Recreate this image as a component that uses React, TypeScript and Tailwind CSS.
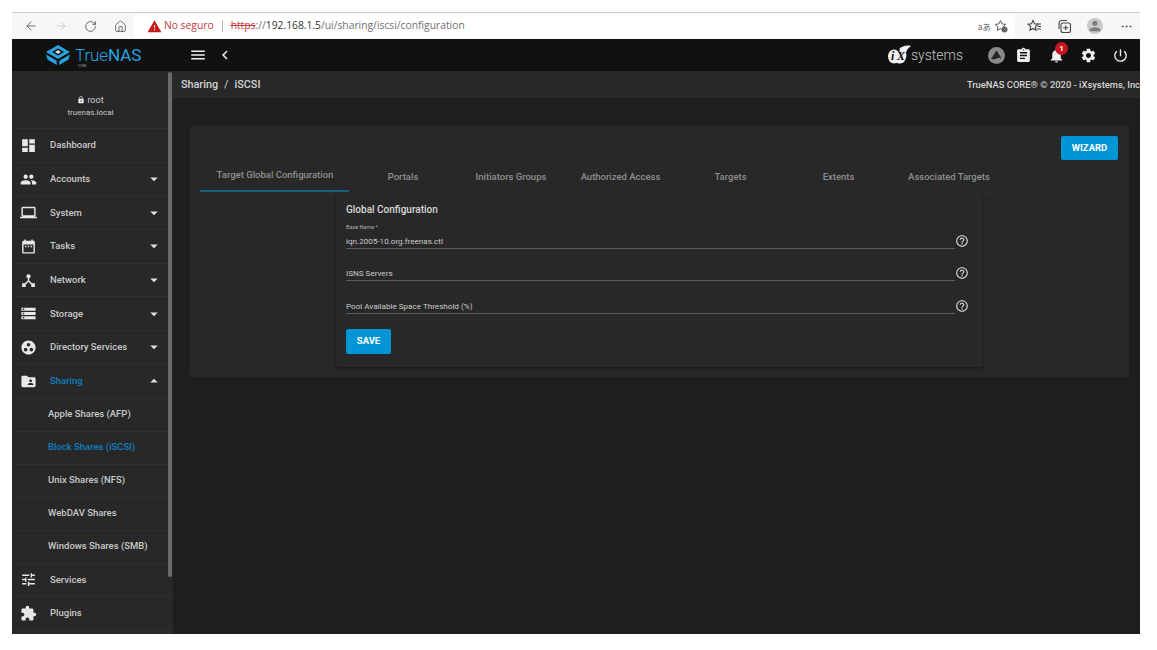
import React from "react";
import {
  MdDashboard, MdPeople, MdLaptop, MdDateRange, MdDeviceHub, MdStorage, MdGroupWork, MdFolderShared,
  MdTune, MdExtension, MdArrowDropDown, MdArrowDropUp, MdMenu, MdChevronLeft, MdLock, MdHelpOutline,
  MdNotifications, MdAssignment, MdSettings, MdPowerSettingsNew, MdWarning, MdPerson,
} from "react-icons/md";
import { ArrowLeft, ArrowRight, RotateCw, Home, MoreHorizontal } from "lucide-react";

const nav: { label: string; Icon: any; caret?: boolean }[] = [
  { label: "Dashboard", Icon: MdDashboard },
  { label: "Accounts", Icon: MdPeople, caret: true },
  { label: "System", Icon: MdLaptop, caret: true },
  { label: "Tasks", Icon: MdDateRange, caret: true },
  { label: "Network", Icon: MdDeviceHub, caret: true },
  { label: "Storage", Icon: MdStorage, caret: true },
  { label: "Directory Services", Icon: MdGroupWork, caret: true },
];
const subs = ["Apple Shares (AFP)", "Block Shares (iSCSI)", "Unix Shares (NFS)", "WebDAV Shares", "Windows Shares (SMB)"];
const tabs: [string, string][] = [
  ["Portals", "w-[108px]"],
  ["Initiators Groups", "w-[108px]"],
  ["Authorized Access", "w-[111px]"],
  ["Targets", "w-[109px]"],
  ["Extents", "w-[107px]"],
  ["Associated Targets", "w-[114px]"],
];

function NavRow({ label, Icon, caret, up, blue }: { label: string; Icon: any; caret?: boolean; up?: boolean; blue?: boolean }) {
  return (
    <div className="h-[33.7px] flex items-center border-b border-[#2f2f2f] pl-[8px] pr-[10px] shrink-0">
      <Icon className="w-[17px] h-[17px] text-[#e8e8e8] shrink-0" />
      <span className={`ml-[13px] flex-1 text-[9.5px] font-medium ${blue ? "text-[#0f7fc0]" : "text-[#c8c8c8]"}`}>{label}</span>
      {caret && (up ? <MdArrowDropUp className="w-[18px] h-[18px] text-[#e0e0e0]" /> : <MdArrowDropDown className="w-[18px] h-[18px] text-[#e0e0e0]" />)}
    </div>
  );
}

function Field({ label, value, mt }: { label?: string; value: string; mt: string }) {
  return (
    <div className={`flex items-end ${mt}`}>
      <div className="w-[609px] border-b border-[#5c5c5c] h-[20px] relative flex items-end pb-[1px]">
        {label && <span className="absolute left-0 top-[-5px] text-[5.5px] leading-[7px] text-[#a8a8a8]">{label}</span>}
        <span className="text-[8.1px] leading-[12px] font-normal text-[#cccccc]">{value}</span>
      </div>
      <MdHelpOutline className="w-[14px] h-[14px] text-[#d8d8d8] mb-[1px]" />
    </div>
  );
}

export default function App() {
  return (
    <div className="w-[1157px] h-[650px] bg-white overflow-hidden pl-[12px] pt-[12px] font-['Roboto',sans-serif]">
      <div className="w-[1128px] h-[622px] flex flex-col overflow-hidden">
        {/* browser chrome */}
        <div className="h-[27px] shrink-0 bg-[#f7f7f7] border-t border-[#cfcfcf] flex items-center">
          <ArrowLeft className="ml-[12px] w-[14px] h-[14px] text-[#444]" strokeWidth={1.3} />
          <ArrowRight className="ml-[16px] w-[14px] h-[14px] text-[#c4c4c4]" strokeWidth={1.3} />
          <RotateCw className="ml-[16px] w-[13px] h-[13px] text-[#444]" strokeWidth={1.4} />
          <Home className="ml-[17px] w-[13px] h-[13px] text-[#444]" strokeWidth={1.4} />
          <div className="ml-[7px] w-[881px] h-[23px] bg-white rounded-[3px] flex items-center pl-[13px] text-[10.3px] whitespace-nowrap font-['Open_Sans',sans-serif]">
            <MdWarning className="w-[15px] h-[15px] text-[#c81818]" />
            <span className="ml-[2px] text-[#c23b3b]">No seguro</span>
            <span className="ml-[8px] w-px h-[12px] bg-[#b5b5b5]" />
            <span className="ml-[8px] text-[#c23b3b] line-through">https</span>
            <span className="text-[#6f6f6f]">://</span>
            <span className="text-[#333]">192.168.1.5</span>
            <span className="text-[#6f6f6f]">/ui/sharing/iscsi/configuration</span>
            <span className="ml-auto text-[8.5px] text-[#666] font-['Noto_Sans_CJK_JP',sans-serif]">aあ</span>
            <svg width="14" height="14" viewBox="0 0 14 14" className="ml-[3px] mr-[7px]">
              <path d="M6.5 1.5l1.6 3.4 3.6.5-2.6 2.5.5 3.5-3.1-1.7-3.2 1.7.6-3.5L1.3 5.4l3.6-.5z" fill="none" stroke="#555" strokeWidth="1" />
              <circle cx="10.5" cy="10.5" r="3" fill="#666" />
            </svg>
          </div>
          <svg width="15" height="14" viewBox="0 0 15 14" className="ml-[12px]">
            <path d="M6 1.5l1.5 3.3 3.5.4-2.6 2.4.6 3.5L6 9.4l-3 1.7.6-3.5L1 5.2l3.5-.4z" fill="none" stroke="#444" strokeWidth="1.1" />
            <path d="M10 5h4M10.5 7.5h3.5M10 10h4" stroke="#444" strokeWidth="1" />
          </svg>
          <svg width="15" height="15" viewBox="0 0 15 15" className="ml-[15px]">
            <path d="M2 10V4.5a3 3 0 0 1 3-3h5" fill="none" stroke="#444" strokeWidth="1.1" />
            <rect x="4" y="4" width="9.5" height="9.5" rx="2" fill="none" stroke="#444" strokeWidth="1.1" />
            <path d="M8.7 6.2v5M6.2 8.7h5" stroke="#444" strokeWidth="1.1" />
          </svg>
          <span className="ml-[15px] w-[16px] h-[16px] rounded-full bg-[#c9c9c9] flex items-center justify-center overflow-hidden">
            <MdPerson className="w-[16px] h-[16px] text-[#7d7d7d]" />
          </span>
          <MoreHorizontal className="ml-[17px] w-[13px] h-[13px] text-[#444]" strokeWidth={1.6} />
        </div>
        {/* top bar */}
        <div className="h-[32px] shrink-0 bg-[#111111] flex items-center text-white">
          <div className="w-[161px] flex items-center pl-[34px] shrink-0">
            <svg width="24" height="20" viewBox="0 0 24 20" className="shrink-0">
              <path d="M0 7L12 0l12 7-12 7z" fill="#27a3e0" />
              <path d="M6 7l6-3.5L18 7l-6 3.5z" fill="#111" />
              <path d="M9 7l3-1.9L15 7l-3 1.9z" fill="#d9d9d9" />
              <path d="M0 9.5l10.7 6.2V20L1.5 14.6z" fill="#27a3e0" />
              <path d="M24 9.5l-10.7 6.2V20l9.2-5.4z" fill="#27a3e0" />
            </svg>
            <span className="ml-[5px] text-[17px] leading-[15px] tracking-[-0.1px] text-[#27a3e0] relative">
              <span className="font-light">True</span><span className="font-normal">NAS</span>
              <span className="absolute left-[3px] top-[16px] text-[3.5px] leading-[4px] text-[#999]">CORE</span>
            </span>
          </div>
          <MdMenu className="ml-[16px] w-[18px] h-[18px] text-[#eee]" />
          <MdChevronLeft className="ml-[9px] w-[18px] h-[18px] text-[#eee]" />
          <div className="ml-auto flex items-center">
            <span className="relative w-[24px] h-[20px] -mr-[1px]">
              <svg width="24" height="20" viewBox="0 0 24 20">
                <ellipse cx="6" cy="11.5" rx="6" ry="7" fill="#f2f2f2" />
                <path d="M12 3c3-2 7-3 11-2-3 2-5 5-5 7 1 3 0 6-2 9-3 2-6 2-8 0 2-3 3-6 4-9 0-2-1-3 0-5z" fill="#f2f2f2" />
              </svg>
              <span className="absolute left-[3px] top-[4px] text-[12px] leading-[14px] font-bold italic text-[#111] font-['Liberation_Serif',serif]">i</span>
              <span className="absolute left-[9px] top-[4px] text-[12px] leading-[14px] font-bold italic text-[#111] font-['Liberation_Serif',serif]">X</span>
            </span>
            <span className="text-[14px] leading-[20px] font-light text-[#c4c4c4]">systems</span>
            <svg width="17" height="17" viewBox="0 0 17 17" className="ml-[25px]">
              <circle cx="8.5" cy="8.5" r="8.5" fill="#8a8a8a" />
              <path d="M8.5 3.5L14 12c-2-1.5-3.5-1.5-5.5-.5S5 12.5 3 12z" fill="#262626" />
            </svg>
            <MdAssignment className="ml-[10px] w-[17px] h-[17px] text-[#f0f0f0]" />
            <span className="ml-[16px] relative">
              <MdNotifications className="w-[17px] h-[17px] text-[#f0f0f0]" />
              <span className="absolute left-[7px] top-[-5px] w-[13px] h-[13px] rounded-full bg-[#c8141e] text-white text-[8px] leading-[13px] text-center font-bold">1</span>
            </span>
            <MdSettings className="ml-[15px] w-[17px] h-[17px] text-[#f0f0f0]" />
            <MdPowerSettingsNew className="ml-[15px] mr-[11px] w-[17px] h-[17px] text-[#f0f0f0]" />
          </div>
        </div>
        {/* body */}
        <div className="flex-1 flex min-h-0">
          <aside className="w-[161px] shrink-0 bg-[#282828] flex flex-col relative overflow-hidden">
            <div className="h-[58px] shrink-0 border-b border-[#2f2f2f] flex flex-col items-center pt-[23px] pr-[4px]">
              <div className="flex items-center text-[9px] leading-[12px] text-[#c8c8c8]">
                <MdLock className="w-[8px] h-[8px] text-[#eee] mr-[2px]" />root
              </div>
              <div className="text-[8px] leading-[12px] text-[#c8c8c8] mt-[1px]">truenas.local</div>
            </div>
            {nav.map((n) => <NavRow key={n.label} {...n} />)}
            <NavRow label="Sharing" Icon={MdFolderShared} caret up blue />
            {subs.map((s, i) => (
              <div key={s} className={`h-[33px] shrink-0 flex items-center pl-[36px] border-b border-[#2f2f2f] text-[9.5px] font-medium ${i === 1 ? "text-[#0f7fc0]" : "text-[#c8c8c8]"}`}>{s}</div>
            ))}
            <NavRow label="Services" Icon={MdTune} />
            <NavRow label="Plugins" Icon={MdExtension} />
            <div className="absolute right-[1px] top-[1px] w-[4px] h-[505px] rounded-full bg-[#6a6a6a]" />
          </aside>
          <main className="flex-1 bg-[#1e1e1e] flex flex-col min-w-0">
            <div className="h-[27px] shrink-0 bg-[#282828] flex items-center justify-between pl-[8px] pt-[2px] whitespace-nowrap">
              <div className="text-[10.8px] font-medium text-[#d4d4d4]">Sharing<span className="mx-[6px] font-normal">/</span>iSCSI</div>
              <div className="text-[9.4px] font-medium text-[#d4d4d4]">TrueNAS CORE® © 2020 - iXsystems, Inc</div>
            </div>
            <section className="mt-[27px] ml-[17px] w-[939px] h-[252px] rounded-[4px] bg-[#282828] flex flex-col pl-[10px] pr-[11px] pt-[11px]">
              <div className="flex justify-end shrink-0">
                <button className="w-[57px] h-[24px] rounded-[2px] bg-[#0095d5] text-white text-[9.5px] font-bold">WIZARD</button>
              </div>
              <div className="h-[31px] mt-[2px] shrink-0 flex border-b border-[#2d2d2d] text-[9.5px] font-medium text-[#8f8f8f] whitespace-nowrap">
                <div className="w-[149px] h-[30px] border-b-2 border-[#17607f] flex items-center justify-center pb-[2px] pl-[1px]">Target Global Configuration</div>
                {tabs.map(([t, w]) => (
                  <div key={t} className={`${w} flex items-center justify-center`}>{t}</div>
                ))}
              </div>
              <div className="ml-[136px] w-[647px] h-[174px] rounded-[3px] bg-[#282828] shadow-[0_1px_3px_rgba(0,0,0,0.45)] px-[10px] pt-[10px]">
                <div className="text-[10px] leading-[14px] font-medium text-[#d8d8d8]">Global Configuration</div>
                <Field label="Base Name *" value="iqn.2005-10.org.freenas.ctl" mt="mt-[12px]" />
                <Field value="ISNS Servers" mt="mt-[12px]" />
                <Field value="Pool Available Space Threshold (%)" mt="mt-[13px]" />
                <button className="mt-[15px] w-[45px] h-[25px] rounded-[2px] bg-[#0095d5] text-white text-[9.5px] font-bold">SAVE</button>
              </div>
            </section>
          </main>
        </div>
      </div>
    </div>
  );
}
